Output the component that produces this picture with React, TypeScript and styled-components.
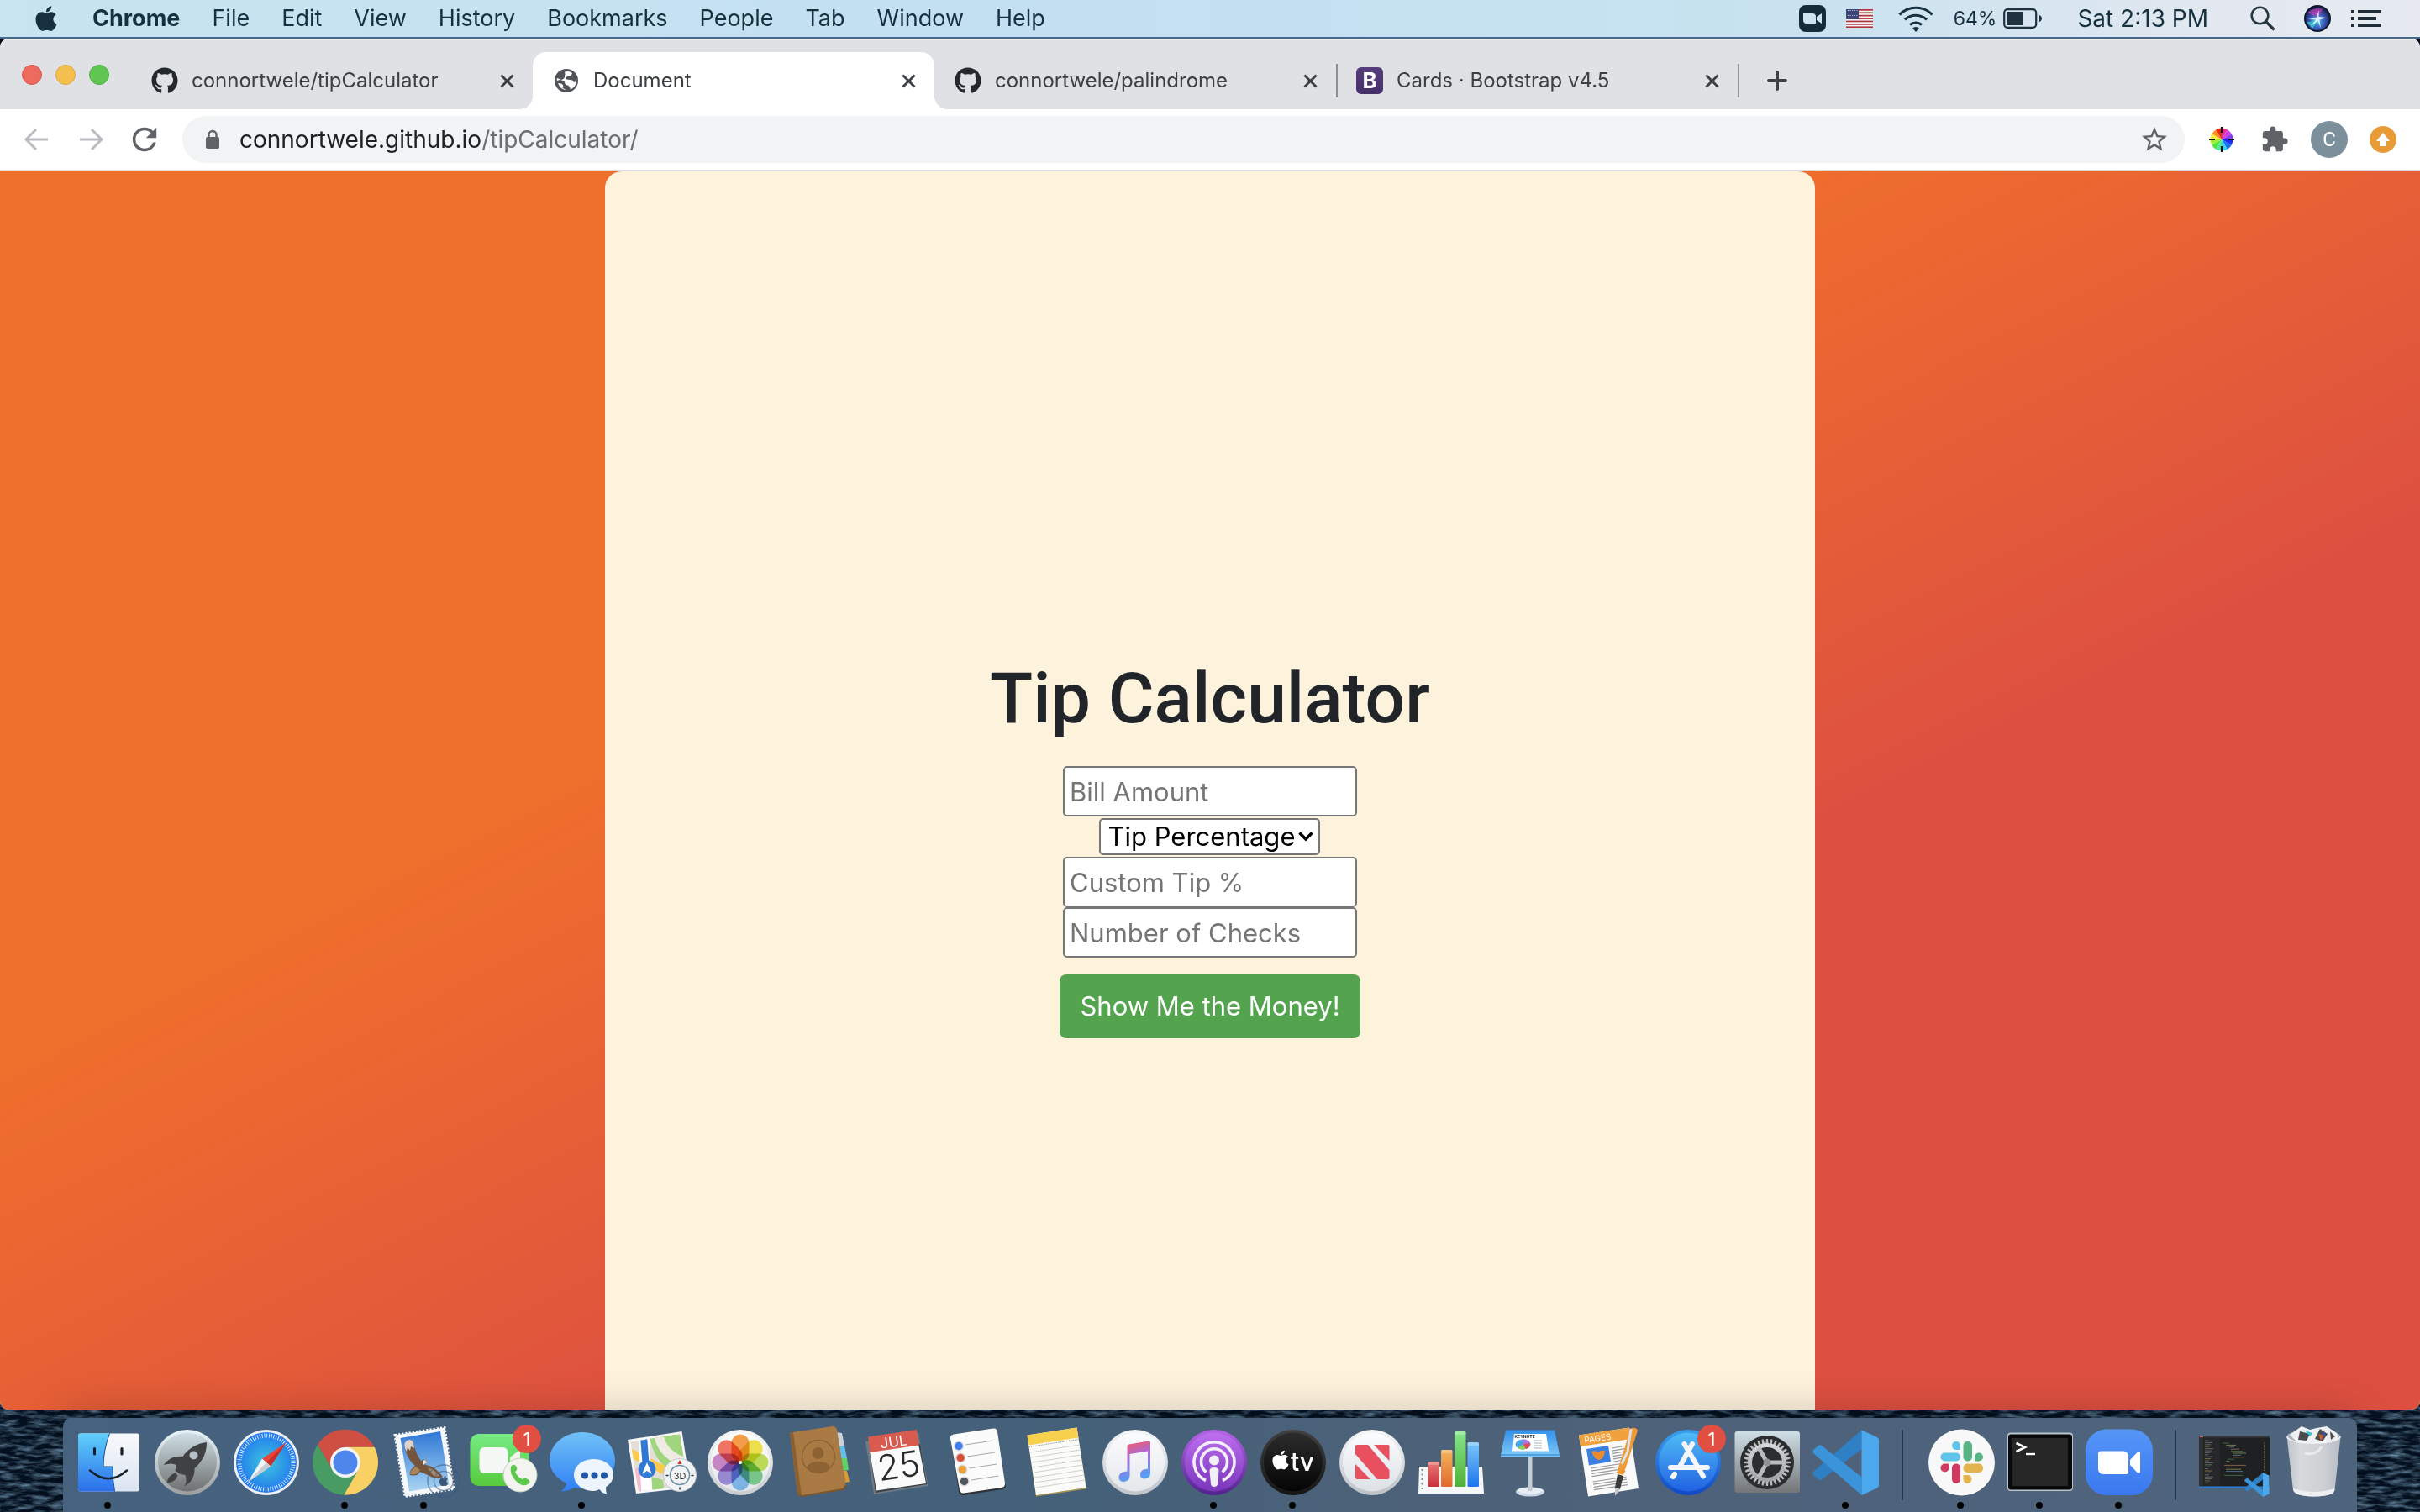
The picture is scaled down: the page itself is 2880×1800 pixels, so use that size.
import React from "react";
import styled, { createGlobalStyle } from "styled-components";
import { FaApple, FaGithub } from "react-icons/fa";
import { MdStarBorder } from "react-icons/md";

const UI = `Inter, Roboto, "Liberation Sans", sans-serif`;

const Global = createGlobalStyle`
  *, *::before, *::after { box-sizing: border-box; }
  body { margin: 0; background: #04101f; font-family: ${UI}; }
  button, input, select { font-family: inherit; margin: 0; }
  svg { display: block; flex: none; }
`;

const Desktop = styled.div`
  position: relative;
  display: flex;
  flex-direction: column;
  height: 100vh;
  overflow: hidden;
  background: #04101f;
`;

const Ocean = styled.svg`
  position: absolute;
  left: 0;
  bottom: 0;
  width: 100%;
  height: 140px;
`;

/* ---------- menu bar ---------- */

const MenuBar = styled.header`
  display: flex;
  align-items: center;
  justify-content: space-between;
  height: 46px;
  flex: none;
  padding: 0 46px 0 38px;
  color: #16303f;
  background: linear-gradient(90deg, #c8e4ef 0%, #c3e0f2 40%, #c8e2ef 75%, #e3e8f0 92%, #e6eaf0 100%);
  border-bottom: 2px solid #44688d;
`;

const MenuGroup = styled.nav`
  display: flex;
  align-items: center;
  gap: 38px;
`;

const MenuItem = styled.button<{ $bold?: boolean }>`
  display: flex;
  padding: 0;
  border: 0;
  background: none;
  color: inherit;
  font-size: 27px;
  line-height: 44px;
  font-weight: ${(p) => (p.$bold ? 700 : 400)};
`;

const StatusGroup = styled.div`
  display: flex;
  align-items: center;
  gap: 24px;
`;

const StatusItem = styled.button<{ $gapAfter?: number }>`
  display: flex;
  align-items: center;
  gap: 8px;
  padding: 0;
  border: 0;
  margin-right: ${(p) => p.$gapAfter ?? 0}px;
  background: none;
  color: inherit;
  font-size: 23px;
  line-height: 44px;
`;

const Clock = styled.time`
  margin: 0 26px 0 18px;
  font-size: 28px;
  line-height: 44px;
`;

/* ---------- browser window ---------- */

const Window = styled.main`
  position: relative;
  display: flex;
  flex-direction: column;
  flex: 1;
  min-height: 0;
  overflow: hidden;
  border-radius: 10px;
  background: #fff;
`;

const TabStrip = styled.div`
  display: flex;
  align-items: flex-end;
  height: 84px;
  flex: none;
  padding-left: 26px;
  background: #dfe1e5;
  border-top: 2px solid #eff0f2;
`;

const Lights = styled.div`
  display: flex;
  align-items: center;
  gap: 16px;
  width: 130px;
  height: 82px;
`;

const Light = styled.button<{ $color: string; $edge: string }>`
  width: 24px;
  height: 24px;
  padding: 0;
  border-radius: 50%;
  border: 1px solid ${(p) => p.$edge};
  background: ${(p) => p.$color};
`;

const TabBox = styled.div<{ $active?: boolean }>`
  position: relative;
  display: flex;
  align-items: center;
  width: 478px;
  height: 68px;
  padding: 0 22px 0 24px;
  border-radius: 16px 16px 0 0;
  background: ${(p) => (p.$active ? "#fff" : "transparent")};

  &::before,
  &::after {
    content: "";
    display: ${(p) => (p.$active ? "block" : "none")};
    position: absolute;
    bottom: 0;
    width: 16px;
    height: 16px;
  }
  &::before {
    right: 100%;
    background: radial-gradient(circle at 0 0, transparent 16px, #fff 16px);
  }
  &::after {
    left: 100%;
    background: radial-gradient(circle at 100% 0, transparent 16px, #fff 16px);
  }
`;

const TabLabel = styled.button`
  display: flex;
  align-items: center;
  gap: 16px;
  flex: 1;
  padding: 0;
  border: 0;
  background: none;
  color: #3c4043;
  font-size: 24px;
  line-height: 32px;
  text-align: left;
`;

const IconButton = styled.button`
  display: flex;
  align-items: center;
  justify-content: center;
  padding: 0;
  border: 0;
  background: none;
  color: #5f6368;
`;

const Divider = styled.span`
  width: 2px;
  height: 40px;
  margin-bottom: 14px;
  margin-right: -2px;
  background: #8d9095;
`;

const NewTab = styled(IconButton)`
  height: 68px;
  padding-left: 34px;
`;

const BootstrapMark = styled.span`
  display: flex;
  align-items: center;
  justify-content: center;
  width: 32px;
  height: 32px;
  border-radius: 6px;
  background: linear-gradient(#563d7c, #452f68);
  color: #fff;
  font-size: 26px;
  font-weight: 700;
`;

const Toolbar = styled.div`
  display: flex;
  align-items: center;
  height: 74px;
  flex: none;
  padding: 0 28px;
  border-bottom: 2px solid #dadce0;
`;

const NavButtons = styled.div`
  display: flex;
  gap: 32px;
  width: 189px;
`;

const Omnibox = styled.div`
  display: flex;
  align-items: center;
  flex: 1;
  height: 56px;
  padding: 0 18px 0 22px;
  border-radius: 28px;
  background: #f1f3f4;
`;

const Address = styled.div`
  flex: 1;
  padding-left: 18px;
  font-size: 28px;
  line-height: 40px;
  color: #202124;
  white-space: nowrap;
`;

const AddressPath = styled.span`
  color: #6a6e73;
`;

const Extensions = styled.div`
  display: flex;
  align-items: center;
  gap: 26px;
  padding-left: 24px;
`;

const Avatar = styled.button`
  width: 44px;
  height: 44px;
  padding: 0;
  border: 0;
  border-radius: 50%;
  background: #7c909c;
  color: #fff;
  font: 400 24px Roboto, sans-serif;
`;

/* ---------- web page ---------- */

const Page = styled.div`
  display: flex;
  justify-content: center;
  flex: 1;
  min-height: 0;
  background: linear-gradient(to bottom right, #ef6f2c 36%, #dd5040 64%);
`;

const Card = styled.section`
  display: flex;
  flex-direction: column;
  align-items: center;
  justify-content: center;
  width: 50%;
  padding-top: 138px;
  border-radius: 20px 20px 0 0;
  background: #fdf2dc;
`;

const Title = styled.h1`
  margin: 0 0 32px;
  color: #212529;
  font: 500 84px/96px Roboto, "Open Sans", sans-serif;
`;

const Form = styled.form`
  display: flex;
  flex-direction: column;
  align-items: center;
`;

const Field = styled.input`
  width: 350px;
  height: 60px;
  padding: 2px 6px;
  border: 2px solid #767676;
  border-radius: 5px;
  background: #fff;
  font-size: 31px;
  line-height: 48px;

  &::placeholder {
    color: #757575;
    opacity: 1;
  }
`;

const SelectWrap = styled.label`
  position: relative;
  display: flex;
  margin: 2px 0;
`;

const Select = styled.select`
  appearance: none;
  height: 44px;
  padding: 0 28px 0 8px;
  border: 2px solid #767676;
  border-radius: 5px;
  background: #fff;
  color: #000;
  font-size: 31px;
  line-height: 36px;
`;

const Chevron = styled.svg`
  position: absolute;
  right: 8px;
  top: 16px;
  pointer-events: none;
`;

const Submit = styled.button`
  height: 76px;
  margin-top: 20px;
  padding: 0 24px;
  border: 0;
  border-radius: 8px;
  background: #54a44f;
  color: #fff;
  font-size: 31px;
  line-height: 48px;
`;

/* ---------- dock ---------- */

const DockArea = styled.footer`
  position: relative;
  display: flex;
  justify-content: center;
  flex: none;
  padding-top: 10px;
`;

const DockBar = styled.div`
  display: flex;
  padding: 0 6px;
  border-radius: 10px 10px 0 0;
  background: linear-gradient(90deg, #46627f 0%, #456079 45%, #4d6279 60%, #4f647d 100%);
  box-shadow: 0 -6px 50px rgba(0, 0, 0, 0.2);
`;

const DockItem = styled.button`
  display: flex;
  width: 94px;
  height: 112px;
  padding: 0;
  border: 0;
  background: none;
`;

const DockDivider = styled.span`
  width: 2px;
  height: 84px;
  margin: 14px 21px 0 20px;
  background: #1f3850;
`;

/* ---------- icons ---------- */

const CloseIcon = () => (
  <svg width="17" height="17" viewBox="0 0 18 18" stroke="#3c4043" strokeWidth="3">
    <path d="M1.5 1.5 16.5 16.5M16.5 1.5 1.5 16.5" />
  </svg>
);

const Globe = () => (
  <svg width="32" height="32" viewBox="0 0 32 32">
    <circle cx="16" cy="16" r="14" fill="#505358" />
    <path d="M14 5.500Q20 4 23 7q-1 4-5 4-3 0-3 3 3 1 6 1 3 0 4 3l3-1q-1 7-7 9.500-1-4-3-5-4 0-4-4-3-3-6-2.500L5 16Q4 15 5 13l5 2q4-1 4-4 1-3 0-5.500z" fill="#fff" />
    <path d="M6 19q4 0 6 2 1 2-1 3 2 2 5 3Q9 27 6 19z" fill="#fff" />
  </svg>
);

const LockIcon = () => (
  <svg width="28" height="28" viewBox="0 0 28 28">
    <path d="M9.500 12V8.500a4.500 4.500 0 0 1 9 0V12" fill="none" stroke="#5f6368" strokeWidth="2.400" />
    <rect x="6" y="11" width="16" height="14" rx="2" fill="#5f6368" />
  </svg>
);

const ReloadIcon = () => (
  <svg width="32" height="32" viewBox="3 3 18 18" fill="#5f6368">
    <path d="M17.65 6.35A7.958 7.958 0 0 0 12 4c-4.420 0-7.990 3.580-7.990 8s3.570 8 7.990 8c3.730 0 6.840-2.550 7.730-6h-2.080A5.990 5.990 0 0 1 12 18c-3.310 0-6-2.690-6-6s2.690-6 6-6c1.660 0 3.140.690 4.220 1.780L13 11h7V4l-2.350 2.350z" />
  </svg>
);

const PuzzleIcon = () => (
  <svg width="34" height="34" viewBox="0 0 24 24" fill="#5f6368">
    <path d="M20.5 11H19V7c0-1.100-.9-2-2-2h-4V3.500a2.500 2.500 0 0 0-5 0V5H4c-1.100 0-1.990.9-1.990 2v3.800H3.500c1.490 0 2.700 1.210 2.700 2.700s-1.210 2.700-2.700 2.700H2V20c0 1.100.9 2 2 2h3.800v-1.500c0-1.490 1.210-2.700 2.700-2.700s2.700 1.210 2.700 2.700V22H17c1.100 0 2-.9 2-2v-4h1.500a2.500 2.500 0 0 0 0-5z" />
  </svg>
);

const ArrowIcon = ({ flip }: { flip?: boolean }) => (
  <svg width="32" height="32" viewBox="0 0 32 32" fill="none" stroke="#b9bbbe" strokeWidth="3">
    <path d={flip ? "M3 16H28M17 4 29 16 17 28" : "M29 16H4M15 4 3 16 15 28"} />
  </svg>
);

const ZoomGlyph = () => (
  <svg width="32" height="32" viewBox="0 0 32 32">
    <rect width="32" height="32" rx="8" fill="#152d3b" />
    <path d="M5 10h11a4 4 0 0 1 4 4v8H9a4 4 0 0 1-4-4zM21 14l6-4v12l-6-4z" fill="#cfe4ee" />
  </svg>
);

const Flag = () => (
  <svg width="32" height="22" viewBox="0 0 32 22">
    <rect width="32" height="22" fill="#f4f4f6" />
    {[0, 1, 2, 3, 4, 5, 6].map((i) => (
      <rect key={i} y={i * 3.4} width="32" height="1.7" fill="#b0343c" />
    ))}
    <rect width="15" height="12" fill="#3d4478" />
    {[2, 5, 8, 11].map((y) => (
      <path key={y} d={`M2 ${y - 0.5}H14`} stroke="#c8cbe0" strokeWidth="1" strokeDasharray="1 1.6" />
    ))}
  </svg>
);

const Wifi = () => (
  <svg width="42" height="32" viewBox="0 0 42 32" fill="none" stroke="#16303f" strokeWidth="3">
    <path d="M1.5 11.500a27 27 0 0 1 39 0M8 17.500a19 19 0 0 1 26 0M14 23.500a11 11 0 0 1 14 0" />
    <path d="M17 27.500a6 6 0 0 1 8 0L21 32z" fill="#16303f" stroke="none" />
  </svg>
);

const Battery = () => (
  <svg width="46" height="24" viewBox="0 0 46 24">
    <rect x="1.200" y="1.200" width="38" height="21.600" rx="4" fill="none" stroke="#1e333f" strokeWidth="2.200" />
    <rect x="4" y="4" width="20" height="16" fill="#1e333f" />
    <path d="M42 7.500q4 1.500 4 4.500t-4 4.500z" fill="#1e333f" />
  </svg>
);

const SearchGlyph = () => (
  <svg width="30" height="30" viewBox="0 0 30 30" fill="none" stroke="#24353f" strokeWidth="2.600">
    <circle cx="11.500" cy="11.500" r="9.800" />
    <path d="M18.500 18.500 28.500 28.500" strokeWidth="3.200" />
  </svg>
);

const Siri = () => (
  <svg width="32" height="32" viewBox="0 0 32 32">
    <defs>
      <radialGradient id="siri" cx="0.5" cy="0.6" r="0.6">
        <stop offset="0" stopColor="#4fc9e8" />
        <stop offset="0.5" stopColor="#3a5dc0" />
        <stop offset="1" stopColor="#1b1440" />
      </radialGradient>
    </defs>
    <circle cx="16" cy="16" r="16" fill="#0f1a2c" />
    <circle cx="16" cy="16" r="14" fill="url(#siri)" />
    <path d="M4 9Q14 2 22 5L17 15z" fill="#c03fb4" opacity="0.7" />
    <path d="M3 20Q12 20 16 15Q14 24 10 28z" fill="#39d6d0" opacity="0.7" />
    <path d="M18 6 17.500 14 27 15 18.500 17.500 20 28 16.500 19 8 25 14 17.500 5 17 14.500 15z" fill="#f2f8ff" opacity="0.85" />
  </svg>
);

const ListGlyph = () => (
  <svg width="36" height="22" viewBox="0 0 36 22" fill="#1f2d37">
    <path d="M0 1h4v4H0zM8 1h28v4H8zM0 9h4v4H0zM8 9h22v4H8zM0 17h4v4H0zM8 17h28v4H8z" />
  </svg>
);

const WHEEL = ["#e0308a", "#d838e8", "#8b3cf0", "#1c2cf0", "#1470f0", "#3cd0e8", "#50e8a0", "#48e840", "#a0f030", "#f8f040", "#ff9020", "#f02818"];

const ColorWheel = () => (
  <svg width="40" height="30" viewBox="-20 -15 40 30">
    {WHEEL.map((c, i) => (
      <path key={c} d="M0 0V-13.500A13.500 13.500 0 0 1 6.750 -11.700z" fill={c} transform={`rotate(${i * 30})`} />
    ))}
    <path d="M0 -15V-8M0 15V8M-15 0H-8M15 0H8" stroke="#111" strokeWidth="2.200" />
  </svg>
);

const UpdateIcon = () => (
  <svg width="32" height="32" viewBox="0 0 32 32">
    <circle cx="16" cy="16" r="16" fill="#e79c38" />
    <path d="M16 8l8 10h-4v6h-8v-6H8z" fill="#fff" />
  </svg>
);

/* ---------- dock drawings, one 94 x 112 tile each ---------- */

const Grad = ({ id, from, to, mid }: { id: string; from: string; to: string; mid?: string }) => (
  <linearGradient id={id} x1="0" y1="0" x2="0" y2="1">
    <stop offset="0" stopColor={from} />
    {mid && <stop offset="0.5" stopColor={mid} />}
    <stop offset="1" stopColor={to} />
  </linearGradient>
);

const Disc = ({ id, from, to, rim, rimEnd }: { id: string; from: string; to: string; rim: string; rimEnd: string }) => (
  <>
    <defs>
      <Grad id={id} from={from} to={to} />
      <Grad id={id + "Rim"} from={rim} to={rimEnd} />
    </defs>
    <circle cx="48" cy="53" r="39" fill={`url(#${id}Rim)`} />
    <circle cx="48" cy="52.500" r="35" fill={`url(#${id})`} />
  </>
);

const Badge = () => (
  <>
    <circle cx="76" cy="25" r="17" fill="#e04f42" />
    <text x="76" y="33" textAnchor="middle" fontSize="22" fill="#fff" fontFamily={UI}>1</text>
  </>
);

const Finder = () => (
  <>
    <defs>
      <Grad id="finL" from="#5fd0fa" to="#2c6eea" />
      <Grad id="finR" from="#f8f9fb" to="#dbe5f2" />
    </defs>
    <rect x="12" y="18.500" width="73" height="69" rx="3" fill="url(#finR)" />
    <path d="M15 18.500H49.500Q42 38 42 58H53Q53 74 55.500 87.500H15a3 3 0 0 1-3-3V21.500a3 3 0 0 1 3-3z" fill="url(#finL)" />
    <path d="M49.500 18.500Q42 38 42 58H53Q53 74 55.500 87.500" fill="none" stroke="#1c4f86" strokeWidth="1" />
    <path d="M31.500 36.500v6.500M64 36.500v6.500" stroke="#15202c" strokeWidth="3.200" strokeLinecap="round" />
    <path d="M26 62.500Q48 82 70 62.500" fill="none" stroke="#15202c" strokeWidth="2.400" strokeLinecap="round" />
  </>
);

const Launchpad = () => (
  <>
    <Disc id="lp" from="#cfe0e6" to="#6f7070" rim="#e9f6fb" rimEnd="#9b9d9f" />
    <path d="M71 29C60 30 48 37 42.500 46C34 45 25 48 20 56Q29 53 35 56L33.500 62.500 38.500 66.500 45.500 68Q48 75 44.500 81.500C54 76 57 68 56.500 60C66 52 71 42 71 29z" fill="#404143" />
    <path d="M34 65Q24 69 24 77.500Q33 77 36.500 69z" fill="#404143" />
    <circle cx="55.500" cy="44.500" r="5" fill="#b4bfc3" />
  </>
);

const Safari = () => (
  <>
    <defs>
      <radialGradient id="saf">
        <stop offset="0" stopColor="#3fc6dd" />
        <stop offset="1" stopColor="#2178ee" />
      </radialGradient>
    </defs>
    <circle cx="48" cy="53" r="39" fill="#eef0f3" />
    <circle cx="48" cy="53" r="36" fill="url(#saf)" />
    <circle cx="48" cy="53" r="32" fill="none" stroke="#e6f3ff" strokeWidth="5" strokeDasharray="0.900 1.893" />
    <path d="M71.500 29.500 43 48.500 53 57.500z" fill="#e8443a" />
    <path d="M71.500 29.500 48 53 53 57.500z" fill="#c62f2a" />
    <path d="M26 76.500 43 48.500 53 57.500z" fill="#f2f4f6" />
    <path d="M26 76.500 48 53 53 57.500z" fill="#c9cdd2" />
  </>
);

const ChromeIcon = () => (
  <>
    <path d="M82.600 34.700A39 39 0 0 0 15.100 31.700L32.400 61.700 48 34.700z" fill="#cf5042" />
    <path d="M15.100 31.700A39 39 0 0 0 46.300 91.700L63.600 61.700 32.400 61.700z" fill="#489b62" />
    <path d="M46.300 91.700A39 39 0 0 0 82.600 34.700H48L63.600 61.700z" fill="#f8d063" />
    <circle cx="48" cy="53" r="18" fill="#f4f5f6" />
    <circle cx="48" cy="53" r="14.500" fill="#4f86ec" />
  </>
);

const Mail = () => (
  <>
    <defs><Grad id="mail" from="#2f77d6" to="#a9d5f3" /></defs>
    <path d="M13 20.500 72 11.500 83 84.500 25 93.500z" fill="#f5f7fa" stroke="#f5f7fa" strokeWidth="3" strokeDasharray="2.200 2" />
    <path d="M19.500 24 67 16 77.500 79.500 30 87.500z" fill="url(#mail)" />
    <path d="M25 36Q23 30 27 27Q32 24 35 29Q37 40 42 48L44 51Q49 48 51 52L49 56Q60 57 70 70Q63 75 54 69Q48 66 43 64Q40 70 31 68Q29 63 37 57Q28 50 25 36z" fill="#74543a" />
    <path d="M25 36Q23 30 27 27Q32 24 35 29L36 36 32 34 31 39 28 35 27 40z" fill="#ddd3ca" />
    <path d="M52 60 58 61 66 69 60 70z" fill="#a58b72" />
    <path d="M46 51q4-2 5 2l-4 3z" fill="#f0e6d8" />
    <path d="M31 67Q30 63 38 58L43 62Q39 69 31 67z" fill="#a9835a" />
    <g fill="none" stroke="#3b5778" strokeWidth="1.500" opacity="0.55">
      <circle cx="71" cy="75" r="19" />
      <circle cx="71" cy="75" r="11.500" />
    </g>
    <FaApple x="64" y="68" size={14} color="#3b5778" />
  </>
);

const FaceTime = () => (
  <>
    <defs><Grad id="ft" from="#76ea84" to="#56cb3c" /></defs>
    <rect x="8.500" y="19" width="70" height="62" rx="10" fill="url(#ft)" />
    <rect x="19.500" y="35" width="34" height="31" rx="6" fill="#f6f8f5" />
    <path d="M56 47 66 39q2 0 2 2v20l-12-7z" fill="#f0f5ee" />
    <circle cx="68" cy="68" r="20" fill="#f3f4f0" stroke="#c9cfc4" strokeWidth="1" />
    <path d="M57 58q4-5 7 1q1 3-2 5q3 7 9 9q3-3 6 0q5 3 0 6q-6 4-14-4t-6-17z" fill="#5cc74a" />
    <Badge />
  </>
);

const Messages = () => (
  <>
    <defs><Grad id="msg" from="#71c2f8" to="#2f80f4" /></defs>
    <path d="M48 17c22 0 39 15 39 33.500S70 84 48 84q-5 0-10-1.200Q31 88 23 87q6-5 6-9C17 72 9 62 9 50.500 9 32 26 17 48 17z" fill="url(#msg)" />
    <path d="M61.500 49C75 49 85 57.500 85 68q0 8-9 14.500 0 5 1 8-6-1-8.500-5.500Q65 87 61.500 87C48 87 38 78.500 38 68s10-19 23.500-19z" fill="#eef4fb" />
    <g fill="#1f57a4">
      <circle cx="51" cy="68.500" r="4" />
      <circle cx="62.500" cy="68.500" r="4" />
      <circle cx="74" cy="68.500" r="4" />
    </g>
  </>
);

const Maps = () => (
  <>
    <defs>
      <clipPath id="mapClip"><path d="M11.500 28.500 70 19 80 80.500 21 87.500z" /></clipPath>
    </defs>
    <path d="M8 26 72.500 16 83 83 18 90z" fill="#f7f7f5" />
    <g clipPath="url(#mapClip)">
      <rect width="94" height="112" fill="#e2ded8" />
      <path d="M34 20H80V66L62 64Q38 52 34 20z" fill="#9fd57c" />
      <path d="M44 16Q48 48 84 54" fill="none" stroke="#efebe2" strokeWidth="11" />
      <path d="M8 40 90 82" stroke="#f8cb4e" strokeWidth="10" />
      <path d="M8 54 26 64 30 92H10z" fill="#f3bcd0" />
      <path d="M36 70 50 74 52 92H38z" fill="#9fd57c" />
      <path d="M27 22 31 92" stroke="#fff" strokeWidth="13" />
      <path d="M27 22 30 60" stroke="#2f78d4" strokeWidth="8" />
    </g>
    <circle cx="31" cy="61" r="10.500" fill="#2f78d4" />
    <path d="M31 53l6 14-6-4-6 4z" fill="#fff" />
    <circle cx="70" cy="68" r="19.500" fill="#f1f2f3" stroke="#c6c9cc" strokeWidth="1" />
    <circle cx="70" cy="68" r="11.500" fill="none" stroke="#6b8fa6" strokeWidth="1.500" />
    <path d="M70 50l2.500 5h-5z" fill="#e02f26" />
    <path d="M53.500 68.500h3M83.500 68.500h3M70 82.500v3" stroke="#333" strokeWidth="1.500" />
    <text x="70" y="72.500" textAnchor="middle" fontSize="11" fill="#333" fontFamily={UI}>3D</text>
  </>
);

const PETALS = ["#f2943a", "#ecdc3c", "#b6d84a", "#6fbf83", "#74aee4", "#8f80cc", "#c47cc0", "#ee6a58"];

const Photos = () => (
  <>
    <Disc id="pho" from="#fdfdfe" to="#e3e5e8" rim="#f6f7f8" rimEnd="#c9ccd0" />
    <g style={{ isolation: "isolate" }}>
      {PETALS.map((c, i) => (
        <rect key={c} x="37.500" y="19.500" width="21" height="33" rx="10.500" fill={c} opacity="0.92"
          transform={`rotate(${i * 45} 48 53)`} style={{ mixBlendMode: "multiply" }} />
      ))}
    </g>
    <circle cx="48" cy="53" r="2" fill="#fff" />
  </>
);

const Contacts = () => (
  <>
    <path d="M68 17 75 18 78 33 70 34z" fill="#cfd2d6" />
    <path d="M72 34 78 33 81 48 74 48z" fill="#63bfe8" />
    <path d="M74 48 81 48 83 62 76 63z" fill="#62cf68" />
    <path d="M77 63 81 63 84 76 79 77z" fill="#dd9a32" />
    <path d="M13 17.500 64 10q4 0 5 4L79.500 80q0 4-4 5L26 93q-3 0-4-3z" fill="#a97a44" />
    <path d="M13 17.500 17 17 27 92.800 22 90z" fill="#8a6032" />
    <path d="M22 90 27 93 77 84.800 79.500 80" fill="none" stroke="#7d562c" strokeWidth="2" />
    <circle cx="47" cy="46" r="19.500" fill="none" stroke="#8e6333" strokeWidth="1.500" />
    <circle cx="46.500" cy="42" r="7" fill="#8e6333" />
    <path d="M33 59Q36 52 47 52t14 6q-5 7.500-14 7.500T33 59z" fill="#8e6333" />
  </>
);

const Calendar = () => (
  <>
    <path d="M9 28 72 18 83.500 81 19 91z" fill="#6e7a84" />
    <path d="M14 40 74 31 82 79 21 89z" fill="#3c4248" />
    <path d="M14 40 72 31 81 78 22 86.500z" fill="#fafafa" />
    <path d="M12 22.500 70 14 72.500 32.500 14.500 41z" fill="#d95b50" />
    <g transform="rotate(-8 47 53)" fontFamily={UI} textAnchor="middle">
      <text x="46" y="34" fontSize="17" fill="#fff">JUL</text>
      <text x="48" y="72" fontSize="42" fontWeight="300" fill="#2a2a2a">25</text>
    </g>
  </>
);

const Reminders = () => (
  <>
    <path d="M16 24 26 87q1 6 6 5L78 85q5-1 4-6z" fill="#2e3338" />
    <path d="M20 19.500 67 12.500q4-.500 5 4L81 78q.500 4-4 5L32 89.500q-4 .500-5-4L16 24.500q-.500-4 4-5z" fill="#fbfbfb" />
    {["#3f7df0", "#d94f3c", "#e8a040", "#50565c"].map((c, i) => (
      <g key={c} transform={`translate(${i * 2.2} ${i * 14})`}>
        <circle cx="26" cy="33.500" r="5.500" fill={c} stroke="#e1e1e3" strokeWidth="1.500" />
        <path d="M34 32 67 27" stroke="#a9a9ab" strokeWidth="1.200" />
      </g>
    ))}
  </>
);

const Notes = () => (
  <>
    <path d="M13.500 21 72.500 12 84 84.500 24 93.500z" fill="#a89250" />
    <path d="M13.500 20.500 72.500 11.500 83.500 83 24 92z" fill="#fbfbf9" />
    <path d="M13.500 20.500 72.500 11.500 74.500 23.500 15.500 32.500z" fill="#f7d04d" />
    <path d="M15.500 34.500 74.500 25.500" stroke="#9a9a9a" strokeWidth="1" strokeDasharray="1.500 1" />
    {[0, 1, 2, 3, 4, 5, 6, 7].map((i) => (
      <path key={i} d="M17.500 41 76 32" stroke="#cfcfcf" strokeWidth="1" transform={`translate(${i * 0.9} ${i * 6})`} />
    ))}
  </>
);

const Music = () => (
  <>
    <Disc id="mus" from="#fbfcfd" to="#e4e7eb" rim="#f5f6f8" rimEnd="#bfc4ca" />
    <defs>
      <linearGradient id="note" gradientUnits="userSpaceOnUse" x1="38" y1="28" x2="52" y2="76">
        <stop offset="0" stopColor="#f35a62" />
        <stop offset="0.4" stopColor="#a96be0" />
        <stop offset="1" stopColor="#49a8f5" />
      </linearGradient>
    </defs>
    <path d="M38.500 33.500q0-1.500 2-2L64 27.500q2-.500 2 1.500v37q0 6-7 6.500-5 0-5-5 0-6 7-6.500l2-.500V39.500L41.500 43V69q0 6-7 7-6 0-6-5 0-6 7-7l3-.500z" fill="url(#note)" />
  </>
);

const Podcasts = () => (
  <>
    <Disc id="pod" from="#bd6ff0" to="#7a36bb" rim="#b565e8" rimEnd="#52228f" />
    <g fill="none" stroke="#f3eff8" strokeWidth="3.600">
      <path d="M38 74.500A24 24 0 1 1 58 74.500" />
      <path d="M38.500 64.500A15.500 15.500 0 1 1 57.500 64.500" />
    </g>
    <circle cx="48" cy="50.500" r="6" fill="#f3eff8" />
    <path d="M42.500 63q0-4 5.500-4t5.500 4L52 79q-.500 3-4 3t-4-3z" fill="#f3eff8" />
  </>
);

const AppleTv = () => (
  <>
    <Disc id="atv" from="#2c2c2c" to="#050505" rim="#3f3f3f" rimEnd="#161616" />
    <FaApple x="20" y="37" size={26} color="#fff" />
    <text x="45" y="63" fontSize="30" fontWeight="500" fill="#fff" fontFamily={UI}>tv</text>
  </>
);

const News = () => (
  <>
    <Disc id="news" from="#fbfcfd" to="#dde1e6" rim="#f5f6f8" rimEnd="#bcc1c8" />
    <path d="M28 34q0-2 2-2H43L68.500 62v9q0 2-2 2H54L28 43z" fill="#e85060" />
    <path d="M50 32H66.500q2 0 2 2V51z" fill="#e85060" />
    <path d="M28 55 46 73H30q-2 0-2-2z" fill="#e85060" />
  </>
);

const BARS = [
  { x: 20.5, y: 52, from: "#ea7a78", to: "#c8303a" },
  { x: 36, y: 38, from: "#f4b45c", to: "#e0692c" },
  { x: 52, y: 16, from: "#86e68c", to: "#50b038" },
  { x: 67.5, y: 29, from: "#7cc8fa", to: "#1f74ee" },
];

const Numbers = () => (
  <>
    <path d="M10 58H85L87 90H9z" fill="#f6f7f8" />
    <path d="M13.500 61v24" stroke="#888" strokeWidth="2" strokeDasharray="2 3.500" />
    {BARS.map((b) => (
      <g key={b.x}>
        <defs><Grad id={"bar" + b.y} from={b.from} to={b.to} /></defs>
        <rect x={b.x} y={b.y} width="13.500" height={82 - b.y} rx="1.500" fill={`url(#bar${b.y})`} />
        <rect x={b.x} y={b.y} width="13.500" height="4" rx="1.500" fill="#fff" opacity="0.25" />
      </g>
    ))}
  </>
);

const Keynote = () => (
  <>
    <defs><Grad id="key" from="#3490ea" to="#7fcaf8" /></defs>
    <ellipse cx="48" cy="88" rx="17" ry="5.500" fill="#cbd7e4" />
    <ellipse cx="48" cy="86.500" rx="15" ry="4" fill="#e6edf4" />
    <rect x="46" y="46" width="4.500" height="41" fill="#c4ccd5" />
    <path d="M19 14.500H77L83 44v2.500H13V44z" fill="url(#key)" />
    <path d="M13 44H83" stroke="#2a78c4" strokeWidth="1.200" />
    <path d="M29 19H67L70 39.500H27z" fill="#fff" />
    <text x="29.500" y="24" fontSize="5" fontWeight="700" fill="#222" fontFamily={UI}>KEYNOTE</text>
    <ellipse cx="39.500" cy="31.500" rx="9" ry="6" fill="#4ba3e8" />
    <path d="M39.500 31.500V25.500A9 6 0 0 1 48 30z" fill="#b070e0" />
    <path d="M39.500 31.500 48 30A9 6 0 0 1 43 37z" fill="#e84a5a" />
    <path d="M39.500 31.500 43 37A9 6 0 0 1 33 36z" fill="#8ad05a" />
    <path d="M52 27h10M52 30h10M52 33h10M52 36h10" stroke="#9db4c4" strokeWidth="1.200" />
  </>
);

const Pages = () => (
  <>
    <path d="M12 20.500 72 11.500 83 84 23 93.500z" fill="#fafafa" />
    <path d="M12 20.500 72 11.500 74 25 14 34z" fill="#f1a23e" />
    <text transform="translate(19 30) rotate(-8)" fontSize="10" fill="#fff" fontFamily={UI}>PAGES</text>
    <path d="M21 37 47 33 50 52 24 56.500z" fill="#3b80e0" />
    <path d="M27 40q6-2 8 1 3-3 8-2-1 10-7 11-5 0-9-10z" fill="#f08a28" />
    {[0, 1, 2, 3, 4, 5].map((i) => (
      <path key={i} d="M51 36 66 33.500" stroke="#9a9a9a" strokeWidth="1.200" transform={`translate(${i * 0.5} ${i * 3.2})`} />
    ))}
    {[0, 1, 2, 3, 5, 6, 7, 8].map((i) => (
      <path key={i} d="M26 60 66 54" stroke="#9a9a9a" strokeWidth="1.200" transform={`translate(${i * 0.5} ${i * 3.2})`} />
    ))}
    <path d="M73.500 13q2-2 5-1 3 .500 3.500 3L65 68 57 66z" fill="#f09a34" />
    <path d="M74 13 70 40 63 55" stroke="#d9e2ea" strokeWidth="3" fill="none" />
    <path d="M58 67 65 69 61 85 55 83z" fill="#3b3b3d" />
    <path d="M55 83 61 85 55 93z" fill="#c4c8cc" />
  </>
);

const AppStore = () => (
  <>
    <Disc id="as" from="#4fbcf6" to="#2162e2" rim="#3aa0ee" rimEnd="#1148c4" />
    <g stroke="#f4f6fa" strokeWidth="6" strokeLinecap="round">
      <path d="M53 31 38 58M43.500 31 66 69.500M27 59H71M32 67l-2 3" />
    </g>
    <Badge />
  </>
);

const TEETH = Array.from({ length: 32 }, (_, i) => i);

const Preferences = () => (
  <>
    <defs>
      <Grad id="pref" from="#cfdfe6" to="#747678" />
      <Grad id="gear" from="#d4d6d8" to="#a2a4a6" />
    </defs>
    <rect x="9.500" y="16" width="77.500" height="73" rx="3" fill="url(#pref)" />
    <circle cx="48" cy="53" r="32" fill="#2c2d2f" />
    {TEETH.map((i) => (
      <path key={i} d="M46.200 32 47 25h2L49.800 32z" fill="#b9bbbd" transform={`rotate(${i * 11.25} 48 53)`} />
    ))}
    <circle cx="48" cy="53" r="20.500" fill="none" stroke="url(#gear)" strokeWidth="5" />
    <path d="M48 53H68M48 53 38 35.500M48 53 38 70.500" stroke="#b9bbbd" strokeWidth="5" />
    <circle cx="48" cy="53" r="4.500" fill="#8f9193" />
  </>
);

const VsShape = () => (
  <>
    <path d="M66.500 14.500 9 64q-1.500 2 0 4l6 5.500q2 1 4 0L66.500 37z" fill="#2f7fc4" />
    <path d="M9 38q-1.500 2 0 4L66.500 92V70.500L19 33q-2-1.500-4 0z" fill="#3b94d9" />
    <path d="M66.500 14.500 85 23q2 1 2 3.500V80q0 2.500-2 3.500L66.500 92z" fill="#4ba8ec" />
  </>
);

const Slack = () => (
  <>
    <circle cx="48.500" cy="53" r="39.500" fill="#f8f8f9" />
    <path d="M37 33a5 5 0 0 1 10 0v5h-5a5 5 0 0 1-5-5z" fill="#62c3ea" />
    <rect x="23.500" y="41.500" width="23.500" height="10" rx="5" fill="#62c3ea" />
    <rect x="50.500" y="28" width="10.500" height="23.500" rx="5" fill="#58b283" />
    <path d="M64 46.500a5 5 0 1 1 5 5h-5z" fill="#58b283" />
    <rect x="37" y="54.500" width="10" height="23.500" rx="5" fill="#d03a60" />
    <path d="M33.500 54.500v5a5 5 0 1 1-5-5z" fill="#d03a60" />
    <rect x="50.500" y="54.500" width="23.500" height="10.500" rx="5" fill="#e2b24d" />
    <path d="M50.500 68h5a5 5 0 1 1-5 5z" fill="#e2b24d" />
  </>
);

const Terminal = () => (
  <>
    <rect x="9" y="17.500" width="78" height="69.500" rx="4" fill="#b9c5cc" />
    <rect x="10" y="19.500" width="76" height="66" rx="3" fill="#0a0a0a" />
    <rect x="15" y="24" width="66" height="57" fill="#262626" />
    <path d="M19.500 30 30 35 19.500 40" fill="none" stroke="#fff" strokeWidth="2.600" />
    <path d="M31 43h11" stroke="#fff" strokeWidth="2.400" />
  </>
);

const Zoom = () => (
  <>
    <defs><Grad id="zm" from="#5596f8" to="#3a78ee" /></defs>
    <rect x="8" y="13.500" width="80" height="78.500" rx="25" fill="url(#zm)" />
    <path d="M26 39.500H53a6 6 0 0 1 6 6V64a3 3 0 0 1-3 3H29a6 6 0 0 1-6-6V42.500a3 3 0 0 1 3-3z" fill="#fff" />
    <path d="M61 50 70 40.500q3-2 3 1v23q0 3-3 1L61 56z" fill="#fff" />
  </>
);

const CODE = [
  [30, 8], [34, 12], [38, 6], [40, 10], [40, 14], [42, 16], [42, 10], [42, 13], [36, 8], [34, 4], [0, 0], [32, 26], [0, 0], [34, 18], [34, 20], [0, 0], [32, 22],
];
const CODE_COLORS = ["#4a7a4c", "#8a9a5a", "#5a87a8", "#a0765a"];

const Minimized = () => (
  <>
    <rect x="6" y="22" width="84" height="60" fill="#1f2021" />
    <rect x="6" y="22" width="4" height="60" fill="#2f3032" />
    <rect x="10" y="24" width="21" height="58" fill="#262729" />
    <rect x="6" y="21.500" width="84" height="2" fill="#38393b" />
    <path d="M7 22.500h4" stroke="#e0605a" strokeWidth="1.200" />
    {Array.from({ length: 22 }, (_, i) => (
      <path key={i} d={`M13 ${27 + i * 2.4}h${4 + ((i * 5) % 7)}`} stroke={i % 6 === 3 ? "#7a6b42" : "#636567"} strokeWidth="1" />
    ))}
    {CODE.map(([x, w], i) => (
      <path key={i} d={`M${x + 4} ${30 + i * 2.4}h${w}`} stroke={CODE_COLORS[i % 4]} strokeWidth="1" opacity="0.75" />
    ))}
    <path d="M84 29v34" stroke="#4c5a52" strokeWidth="2" strokeDasharray="1.500 1" />
    <rect x="6" y="81.500" width="84" height="2" fill="#2f7fd8" />
    <g transform="translate(57 59.500) scale(0.375)"><VsShape /></g>
  </>
);

const Trash = () => (
  <>
    <defs>
      <linearGradient id="tr">
        <stop offset="0" stopColor="#c4c8cd" />
        <stop offset="0.25" stopColor="#dedfe2" />
        <stop offset="0.7" stopColor="#d4d5d8" />
        <stop offset="1" stopColor="#bcc1c8" />
      </linearGradient>
    </defs>
    <ellipse cx="48.500" cy="22" rx="32" ry="8" fill="#aab4be" />
    <path d="M20 20 34 10 44 14 52 12 64 10 76 18 78 25 60 30H30z" fill="#eef0f1" />
    <path d="M32 16l12 3-4 8-10-1zM56 13l9 6-6 9-9-3zM68 16l6 6-5 4z" fill="#4a4c50" />
    <path d="M38 15l9 3-3 4z" fill="#3cc0d0" />
    <path d="M54 19l7 2-4 6z" fill="#c8622c" />
    <path d="M58 16l5 3-3 3z" fill="#3b50a0" />
    <path d="M16.500 22Q20 30 48.500 30T80.500 22L73.500 86q-1 7-25 7.500Q26 93 24 86z" fill="url(#tr)" opacity="0.95" />
    <path d="M24.500 84Q48 92 73.500 84L73 87q-2 6-24.500 6.500Q26 93 24.500 86z" fill="#eeeff0" />
    <path d="M38 42q14 3 20-8" fill="none" stroke="#f2f2f4" strokeWidth="3" opacity="0.7" />
    <path d="M16.500 22Q20 30 48.500 30T80.500 22" fill="none" stroke="#f4f5f6" strokeWidth="1.500" />
  </>
);

type DockApp = { name: string; art: React.ReactNode; running?: boolean };

const APPS: DockApp[] = [
  { name: "Finder", art: <Finder />, running: true },
  { name: "Launchpad", art: <Launchpad /> },
  { name: "Safari", art: <Safari /> },
  { name: "Chrome", art: <ChromeIcon />, running: true },
  { name: "Mail", art: <Mail />, running: true },
  { name: "FaceTime", art: <FaceTime /> },
  { name: "Messages", art: <Messages />, running: true },
  { name: "Maps", art: <Maps /> },
  { name: "Photos", art: <Photos /> },
  { name: "Contacts", art: <Contacts /> },
  { name: "Calendar", art: <Calendar /> },
  { name: "Reminders", art: <Reminders /> },
  { name: "Notes", art: <Notes /> },
  { name: "Music", art: <Music /> },
  { name: "Podcasts", art: <Podcasts />, running: true },
  { name: "TV", art: <AppleTv />, running: true },
  { name: "News", art: <News /> },
  { name: "Numbers", art: <Numbers /> },
  { name: "Keynote", art: <Keynote /> },
  { name: "Pages", art: <Pages /> },
  { name: "App Store", art: <AppStore /> },
  { name: "System Preferences", art: <Preferences /> },
  { name: "Visual Studio Code", art: <VsShape />, running: true },
];

const RECENT: DockApp[] = [
  { name: "Slack", art: <Slack />, running: true },
  { name: "Terminal", art: <Terminal />, running: true },
  { name: "Zoom", art: <Zoom />, running: true },
];

const SHELF: DockApp[] = [
  { name: "Minimized window", art: <Minimized /> },
  { name: "Trash", art: <Trash /> },
];

const DockIcons = ({ apps }: { apps: DockApp[] }) => (
  <>
    {apps.map((a) => (
      <DockItem key={a.name} aria-label={a.name}>
        <svg width="94" height="112" viewBox="0 0 94 112">
          {a.art}
          {a.running && <circle cx="47" cy="104" r="4" fill="#000" />}
        </svg>
      </DockItem>
    ))}
  </>
);

type TabProps = { icon: React.ReactNode; title: string; active?: boolean };

const Tab = ({ icon, title, active }: TabProps) => (
  <TabBox $active={active}>
    <TabLabel role="tab" aria-selected={!!active}>
      {icon}
      {title}
    </TabLabel>
    <IconButton aria-label={`Close ${title}`}>
      <CloseIcon />
    </IconButton>
  </TabBox>
);

const MENUS = ["File", "Edit", "View", "History", "Bookmarks", "People", "Tab", "Window", "Help"];

export default function App() {
  return (
    <Desktop>
      <Global />
      <Ocean aria-hidden="true">
        <filter id="waves" x="0" y="0" width="100%" height="100%">
          <feTurbulence type="fractalNoise" baseFrequency="0.05 0.2" numOctaves="4" seed="7" />
          <feColorMatrix values="0 0 0 0 0.16  0 0 0 0 0.29  0 0 0 0 0.42  1.8 0 0 0 -0.7" />
        </filter>
        <rect width="100%" height="100%" filter="url(#waves)" />
      </Ocean>

      <MenuBar>
        <MenuGroup aria-label="Menu bar">
          <MenuItem aria-label="Apple menu">
            <FaApple size={34} />
          </MenuItem>
          <MenuItem $bold>Chrome</MenuItem>
          {MENUS.map((m) => (
            <MenuItem key={m}>{m}</MenuItem>
          ))}
        </MenuGroup>
        <StatusGroup>
          <StatusItem aria-label="Zoom"><ZoomGlyph /></StatusItem>
          <StatusItem aria-label="Input source" $gapAfter={6}><Flag /></StatusItem>
          <StatusItem aria-label="Wi-Fi"><Wifi /></StatusItem>
          <StatusItem>64% <Battery /></StatusItem>
          <Clock>Sat 2:13 PM</Clock>
          <StatusItem aria-label="Search" $gapAfter={10}><SearchGlyph /></StatusItem>
          <StatusItem aria-label="Siri"><Siri /></StatusItem>
          <StatusItem aria-label="Notification Center"><ListGlyph /></StatusItem>
        </StatusGroup>
      </MenuBar>

      <Window>
        <TabStrip role="tablist">
          <Lights>
            <Light aria-label="Close window" $color="#ed6a5e" $edge="#d8584c" />
            <Light aria-label="Minimize window" $color="#f5bf4f" $edge="#dca63c" />
            <Light aria-label="Zoom window" $color="#61c554" $edge="#4fae42" />
          </Lights>
          <Tab icon={<FaGithub size={32} color="#24292e" />} title="connortwele/tipCalculator" />
          <Tab icon={<Globe />} title="Document" active />
          <Tab icon={<FaGithub size={32} color="#24292e" />} title="connortwele/palindrome" />
          <Divider />
          <Tab icon={<BootstrapMark>B</BootstrapMark>} title="Cards · Bootstrap v4.5" />
          <Divider />
          <NewTab aria-label="New tab">
            <svg width="26" height="26" viewBox="0 0 26 26" stroke="#3c4043" strokeWidth="4" strokeLinecap="round">
              <path d="M13 3V23M3 13H23" />
            </svg>
          </NewTab>
        </TabStrip>

        <Toolbar>
          <NavButtons>
            <IconButton aria-label="Back"><ArrowIcon /></IconButton>
            <IconButton aria-label="Forward"><ArrowIcon flip /></IconButton>
            <IconButton aria-label="Reload"><ReloadIcon /></IconButton>
          </NavButtons>
          <Omnibox>
            <LockIcon />
            <Address role="textbox" aria-label="Address bar">
              connortwele.github.io<AddressPath>/tipCalculator/</AddressPath>
            </Address>
            <IconButton aria-label="Bookmark this page"><MdStarBorder size={36} /></IconButton>
          </Omnibox>
          <Extensions>
            <IconButton aria-label="Color picker"><ColorWheel /></IconButton>
            <IconButton aria-label="Extensions"><PuzzleIcon /></IconButton>
            <Avatar aria-label="Profile">C</Avatar>
            <IconButton aria-label="Update"><UpdateIcon /></IconButton>
          </Extensions>
        </Toolbar>

        <Page>
          <Card>
            <Title>Tip Calculator</Title>
            <Form onSubmit={(e) => e.preventDefault()}>
              <Field aria-label="Bill Amount" placeholder="Bill Amount" />
              <SelectWrap>
                <Select aria-label="Tip Percentage" defaultValue="">
                  <option value="">Tip Percentage</option>
                  <option value="10">10%</option>
                  <option value="15">15%</option>
                  <option value="20">20%</option>
                </Select>
                <Chevron width="18" height="12" viewBox="0 0 18 12" fill="none" stroke="#000" strokeWidth="3.600">
                  <path d="M1.500 1.500 9 9 16.500 1.500" />
                </Chevron>
              </SelectWrap>
              <Field aria-label="Custom Tip %" placeholder="Custom Tip %" />
              <Field aria-label="Number of Checks" placeholder="Number of Checks" />
              <Submit>Show Me the Money!</Submit>
            </Form>
          </Card>
        </Page>
      </Window>

      <DockArea>
        <DockBar>
          <DockIcons apps={APPS} />
          <DockDivider />
          <DockIcons apps={RECENT} />
          <DockDivider />
          <DockIcons apps={SHELF} />
        </DockBar>
      </DockArea>
    </Desktop>
  );
}
